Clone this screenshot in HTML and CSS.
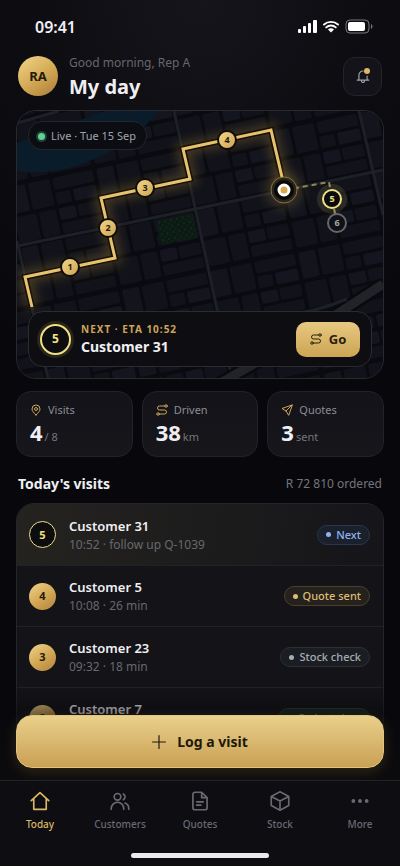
FILE: index.html
```
<!DOCTYPE html>
<html lang="en">
<head>
    <meta charset="UTF-8">
    <meta name="viewport" content="width=device-width, initial-scale=1.0">
    <title>My day</title>
    <link rel="stylesheet" href="styles.css">
</head>
<body>
    <div class="app">
        <div class="status-bar">
            <span class="time">09:41</span>
            <svg class="status-icons" viewBox="0 0 76 16" aria-hidden="true">
                <g fill="#fff">
                    <rect x="0" y="10" width="3" height="4" rx="1"/>
                    <rect x="5" y="7" width="3" height="7" rx="1"/>
                    <rect x="10" y="4" width="3" height="10" rx="1"/>
                    <rect x="15" y="1" width="4" height="13" rx="1"/>
                    <rect x="50" y="3" width="17" height="9" rx="2"/>
                    <path d="M30 10.500a4 4 0 0 1 6 0L33 13.500z"/>
                </g>
                <path d="M26 5.500a10.500 10.500 0 0 1 14 0M28.200 8.400a7 7 0 0 1 9.600 0" fill="none" stroke="#fff" stroke-width="1.900" stroke-linecap="round"/>
                <rect x="48" y="1" width="23" height="13" rx="4" fill="none" stroke="#77777b"/>
                <path d="M73 5v5c2-1 2-4 0-5z" fill="#77777b"/>
            </svg>
        </div>

        <header class="header">
            <div class="avatar">RA</div>
            <div class="greeting">
                <p>Good morning, Rep A</p>
                <h1>My day</h1>
            </div>
            <button class="bell" type="button" aria-label="Notifications">
                <svg class="icon" viewBox="0 0 24 24"><path d="M2 19h20M5 19V11a7 7 0 0 1 7-7.500M19 19v-7M9.500 20.500c0 3.500 5 3.500 5 0"/></svg>
                <span class="bell-dot"></span>
            </button>
        </header>

        <main class="content">
            <section class="map-card" aria-label="Route map">
                <svg class="map" viewBox="0 0 366 267" preserveAspectRatio="xMidYMid slice">
                    <defs>
                        <pattern id="blocks" width="90" height="62" patternUnits="userSpaceOnUse" patternTransform="translate(8 166) rotate(-12)">
                            <rect width="90" height="62" fill="#0a0b10"/>
                            <g fill="#12131a">
                                <rect x="2" y="2" width="22" height="26" rx="2"/>
                                <rect x="27" y="2" width="17" height="26" rx="2"/>
                                <rect x="47" y="2" width="17" height="12" rx="2" fill="#14151e"/>
                                <rect x="66" y="2" width="22" height="12" rx="2"/>
                                <rect x="47" y="17" width="41" height="11" rx="2"/>
                                <rect x="2" y="33" width="17" height="27" rx="2" fill="#13141c"/>
                                <rect x="22" y="33" width="22" height="27" rx="2"/>
                                <rect x="47" y="33" width="41" height="12" rx="2"/>
                                <rect x="47" y="48" width="15" height="12" rx="2"/>
                                <rect x="65" y="48" width="23" height="12" rx="2" fill="#14151e"/>
                            </g>
                        </pattern>
                        <pattern id="trees" width="6" height="6" patternUnits="userSpaceOnUse">
                            <rect width="6" height="6" fill="#0b1a13"/>
                            <circle cx="2" cy="2" r="1" fill="#142f1e"/>
                            <circle cx="5" cy="5" r="1" fill="#10261a"/>
                        </pattern>
                        <linearGradient id="gold" x1="0" y1="0" x2="1" y2="1">
                            <stop offset="0" stop-color="#f3d88c"/>
                            <stop offset="1" stop-color="#cda252"/>
                        </linearGradient>
                        <filter id="glow" x="-20%" y="-20%" width="140%" height="140%">
                            <feGaussianBlur stdDeviation="6"/>
                        </filter>
                    </defs>
                    <rect width="366" height="267" fill="url(#blocks)"/>
                    <path d="M0 60C40 68 105 46 142 0H88L0 32z" fill="#0a1c29"/>
                    <rect x="-19" y="-12" width="38" height="24" rx="3" transform="translate(160 118) rotate(-12)" fill="url(#trees)"/>
                    <g class="roads">
                        <path d="M0 12L42 0M0 135L366 59M157 0L215 267M342 0L366 104M0 130L31 267"/>
                        <path class="road-dark" d="M200 274L270 234Q310 210 366 173"/>
                        <path class="road-wide" d="M200 274L270 234Q310 210 366 173"/>
                        <path d="M260 206Q300 201 330 188"/>
                    </g>

                    <path class="route-glow" d="M15 196L8 166L98 147L84 87L173 68L166 38L254 19L268 79" filter="url(#glow)"/>
                    <path class="route-edge" d="M15 196L8 166L98 147L84 87L173 68L166 38L254 19L268 79"/>
                    <path class="route" d="M15 196L8 166L98 147L84 87L173 68L166 38L254 19L268 79"/>
                    <path class="route-ahead" d="M268 79L312 71L315 88L320 112"/>

                    <g class="stops">
                        <circle cx="53" cy="156" r="9"/><text x="53" y="159">1</text>
                        <circle cx="91" cy="117" r="9"/><text x="91" y="120">2</text>
                        <circle cx="128" cy="77" r="9"/><text x="128" y="80">3</text>
                        <circle cx="210" cy="29" r="9"/><text x="210" y="32">4</text>
                    </g>

                    <circle cx="267" cy="79" r="18" fill="#dfb65f" opacity=".2" filter="url(#glow)"/>
                    <circle cx="267" cy="79" r="13" fill="#2a2519" stroke="#857444"/>
                    <circle cx="267" cy="79" r="10" fill="#08080b"/>
                    <circle cx="267" cy="79" r="5" fill="#d8a850" stroke="#fff" stroke-width="3"/>

                    <circle cx="320" cy="112" r="9" fill="#101116" stroke="#65676d" stroke-width="2"/>
                    <text class="stop-later" x="320" y="115">6</text>
                    <circle cx="315" cy="88" r="15" fill="#eadb7a" opacity=".12"/>
                    <circle cx="315" cy="88" r="9" fill="#0c0c0f" stroke="#f1e184" stroke-width="2"/>
                    <text class="stop-next" x="315" y="91">5</text>
                </svg>

                <div class="live"><span class="live-dot"></span>Live · Tue 15 Sep</div>

                <div class="next-card">
                    <span class="next-number">5</span>
                    <div class="next-info">
                        <p>NEXT · ETA 10:52</p>
                        <h2>Customer 31</h2>
                    </div>
                    <button class="go" type="button">
                        <svg class="icon" viewBox="0 0 24 24"><circle cx="20" cy="4" r="2.500"/><circle cx="4" cy="20" r="2.500"/><path d="M17.500 4H7a4 4 0 0 0 0 8h10a4 4 0 0 1 0 8H6.500"/></svg>
                        Go
                    </button>
                </div>
            </section>

            <section class="stats">
                <div class="stat">
                    <p><svg class="icon" viewBox="0 0 24 24"><path d="M12 22C7 17 4 13.500 4 10a8 8 0 0 1 16 0c0 3.500-3 7-8 12z"/><circle cx="12" cy="10" r="3"/></svg>Visits</p>
                    <div class="value"><strong>4</strong><span>/ 8</span></div>
                </div>
                <div class="stat">
                    <p><svg class="icon" viewBox="0 0 24 24"><circle cx="20" cy="4" r="2.500"/><circle cx="4" cy="20" r="2.500"/><path d="M17.500 4H7a4 4 0 0 0 0 8h10a4 4 0 0 1 0 8H6.500"/></svg>Driven</p>
                    <div class="value"><strong>38</strong><span>km</span></div>
                </div>
                <div class="stat">
                    <p><svg class="icon" viewBox="0 0 24 24"><path d="M22 2L2 9l8 5 5 8zM22 2L10 14"/></svg>Quotes</p>
                    <div class="value"><strong>3</strong><span>sent</span></div>
                </div>
            </section>

            <div class="section-head">
                <h2>Today's visits</h2>
                <span>R 72 810 ordered</span>
            </div>

            <ul class="visits">
                <li class="visit current">
                    <span class="number">5</span>
                    <div class="visit-info">
                        <h3>Customer 31</h3>
                        <p>10:52 · follow up Q-1039</p>
                    </div>
                    <span class="tag blue">Next</span>
                </li>
                <li class="visit">
                    <span class="number">4</span>
                    <div class="visit-info">
                        <h3>Customer 5</h3>
                        <p>10:08 · 26 min</p>
                    </div>
                    <span class="tag amber">Quote sent</span>
                </li>
                <li class="visit">
                    <span class="number">3</span>
                    <div class="visit-info">
                        <h3>Customer 23</h3>
                        <p>09:32 · 18 min</p>
                    </div>
                    <span class="tag grey">Stock check</span>
                </li>
                <li class="visit">
                    <span class="number">2</span>
                    <div class="visit-info">
                        <h3>Customer 7</h3>
                        <p>08:55 · 22 min</p>
                    </div>
                    <span class="tag green">Order taken</span>
                </li>
            </ul>
        </main>

        <div class="bottom">
            <div class="cta">
                <button class="log" type="button">
                    <svg class="icon" viewBox="0 0 24 24"><path d="M12 1v22M1 12h22"/></svg>
                    Log a visit
                </button>
            </div>
            <nav class="tabs">
                <a class="active" href="#today">
                    <svg class="icon" viewBox="0 0 24 24"><path d="M1.500 11.500L12 2l10.500 9.500M4.500 9v13h15V9"/></svg>
                    Today
                </a>
                <a href="#customers">
                    <svg class="icon" viewBox="0 0 24 24"><circle cx="9" cy="7" r="4"/><path d="M1.500 22v-1a7.500 7.500 0 0 1 15 0v1M16 3.500a4 4 0 0 1 0 7M18 14.500a7 7 0 0 1 4.500 6.500v1"/></svg>
                    Customers
                </a>
                <a href="#quotes">
                    <svg class="icon" viewBox="0 0 24 24"><path d="M14 1.500H6A2.500 2.500 0 0 0 3.500 4v16A2.500 2.500 0 0 0 6 22.500h12a2.500 2.500 0 0 0 2.500-2.500V8zM14 1.500V8h6.500M8 13h8M8 17h5"/></svg>
                    Quotes
                </a>
                <a href="#stock">
                    <svg class="icon" viewBox="0 0 24 24"><path d="M12 1l10.500 5.500v11L12 23 1.500 17.500v-11zM1.500 6.500L12 12l10.500-5.500M12 12v11"/></svg>
                    Stock
                </a>
                <a href="#more">
                    <svg class="icon dots" viewBox="0 0 24 24"><circle cx="4" cy="12" r="2.300"/><circle cx="12" cy="12" r="2.300"/><circle cx="20" cy="12" r="2.300"/></svg>
                    More
                </a>
            </nav>
            <div class="home-bar"></div>
        </div>
    </div>
</body>
</html>
```
FILE: styles.css
```
* {
    box-sizing: border-box;
}
body {
    margin: 0;
    background: #08080c;
    color: #efeff3;
    font-family: "Segoe UI", "Noto Sans", sans-serif;
    font-size: 12px;
    line-height: 16px;
}
h1, h2, h3, p, ul {
    margin: 0;
    padding: 0;
}
button {
    font-family: inherit;
    cursor: pointer;
}
.icon {
    width: 14px;
    height: 14px;
    fill: none;
    stroke: currentColor;
    stroke-width: 2;
    stroke-linecap: round;
    stroke-linejoin: round;
}
.app {
    display: flex;
    flex-direction: column;
    height: 100vh;
    position: relative;
    overflow: hidden;
    background: radial-gradient(circle at 50% 0, #15151b, #0c0c11 180px, #08080c 400px);
}

/* status bar and header */
.status-bar {
    display: flex;
    justify-content: space-between;
    align-items: center;
    padding: 16px 26px 0 35px;
    height: 38px;
}
.time {
    font-size: 16px;
    font-weight: 600;
}
.status-icons {
    width: 76px;
    height: 16px;
}
.header {
    display: flex;
    align-items: center;
    gap: 11px;
    padding: 15px 18px 11px;
}
.avatar {
    display: grid;
    place-items: center;
    width: 40px;
    height: 40px;
    border-radius: 50%;
    background: linear-gradient(145deg, #f0d68a, #d6ac57 50%, #a87c38);
    color: #211a0b;
    font-size: 13px;
    font-weight: 700;
}
.greeting {
    flex: 1;
    padding-top: 2px;
}
.greeting p {
    color: #66676e;
}
.greeting h1 {
    font-size: 20px;
    line-height: 24px;
    margin-top: 4px;
}
.bell {
    position: relative;
    display: grid;
    place-items: center;
    width: 39px;
    height: 39px;
    padding: 0;
    border: 1px solid #24252b;
    border-radius: 12px;
    background: #131319;
    color: #a3a4ab;
}
.bell-dot {
    position: absolute;
    top: 10px;
    right: 11px;
    width: 6px;
    height: 6px;
    border-radius: 50%;
    background: #dfb862;
}
.content {
    flex: 1;
    min-height: 0;
    overflow-y: auto;
    scrollbar-width: none;
    padding: 0 16px;
}

/* map */
.map-card {
    position: relative;
    display: flex;
    flex-direction: column;
    justify-content: space-between;
    align-items: flex-start;
    min-height: 269px;
    padding: 10px 11px 11px;
    border: 1px solid #292a2f;
    border-radius: 20px;
    overflow: hidden;
    background: #0a0b10;
}
.map {
    position: absolute;
    inset: 0;
    width: 100%;
    height: 100%;
}
.roads path {
    fill: none;
    stroke: #1e2027;
    stroke-width: 3;
}
.roads .road-dark {
    stroke: #090a0e;
    stroke-width: 14;
}
.roads .road-wide {
    stroke: #212329;
    stroke-width: 9;
}
.route-glow, .route-edge, .route, .route-ahead {
    fill: none;
}
.route-glow {
    stroke: #d6a53c;
    stroke-width: 12;
    opacity: .28;
}
.route-edge {
    stroke: #171005;
    stroke-width: 6;
}
.route {
    stroke: #e6c16f;
    stroke-width: 3;
}
.route-ahead {
    stroke: #8e8755;
    stroke-width: 2;
    stroke-dasharray: 5 4;
}
.map text {
    font-size: 9px;
    font-weight: 700;
    text-anchor: middle;
    fill: #241b0a;
}
.stops circle {
    fill: url(#gold);
    stroke: #100d08;
    stroke-width: 2;
}
.map .stop-next {
    fill: #f1e184;
}
.map .stop-later {
    fill: #a4a5aa;
}
.live {
    position: relative;
    display: flex;
    align-items: center;
    gap: 6px;
    padding: 6px 10px 5px 9px;
    border: 1px solid #25262b;
    border-radius: 14px;
    background: #0c0d12;
    color: #a3a4ab;
    font-size: 11px;
}
.live-dot {
    width: 7px;
    height: 7px;
    border-radius: 50%;
    background: #63cf98;
    box-shadow: 0 0 0 2px #1e4033;
}
.next-card {
    position: relative;
    display: flex;
    align-items: center;
    gap: 10px;
    width: 100%;
    padding: 9px 11px;
    border: 1px solid #2b2c31;
    border-radius: 15px;
    background: #0e0e12;
}
.next-number {
    display: grid;
    place-items: center;
    width: 31px;
    height: 31px;
    border: 2px solid #efdf85;
    border-radius: 50%;
    box-shadow: 0 0 0 3px #28251b;
    background: #0d0d10;
    color: #f1e184;
    font-weight: 700;
}
.next-info {
    flex: 1;
}
.next-info p {
    color: #cda45a;
    font-size: 10px;
    font-weight: 700;
    letter-spacing: 1px;
}
.next-info h2 {
    font-size: 14px;
    line-height: 20px;
}
.go {
    display: flex;
    align-items: center;
    justify-content: center;
    gap: 7px;
    width: 64px;
    height: 35px;
    padding: 0;
    border: 0;
    border-radius: 10px;
    background: linear-gradient(#e6c980, #cda454);
    color: #2a200d;
    font-size: 13px;
    font-weight: 700;
}
.go .icon {
    width: 12px;
    height: 12px;
}

/* stats */
.stats {
    display: grid;
    grid-template-columns: repeat(3, 1fr);
    gap: 9px;
    margin-top: 12px;
}
.stat {
    padding: 10px 13px;
    border: 1px solid #222329;
    border-radius: 15px;
    background: linear-gradient(#131319, #16161b);
}
.stat p {
    display: flex;
    align-items: center;
    gap: 6px;
    color: #8c8d94;
    font-size: 11px;
}
.stat .icon {
    width: 12px;
    height: 12px;
    color: #cda65a;
}
.value {
    display: flex;
    align-items: baseline;
    gap: 2px;
}
.value strong {
    font-size: 22px;
    line-height: 28px;
}
.value span {
    color: #74757c;
    font-size: 11px;
}

/* visits list */
.section-head {
    display: flex;
    align-items: center;
    justify-content: space-between;
    padding: 17px 2px 9px;
}
.section-head h2 {
    font-size: 14px;
    line-height: 20px;
}
.section-head span {
    color: #74757c;
}
.visits {
    list-style: none;
    border: 1px solid #24252a;
    border-radius: 18px;
    background: #131318;
    overflow: hidden;
}
.visit {
    display: flex;
    align-items: center;
    gap: 13px;
    height: 61px;
    padding: 0 13px 0 12px;
}
.visit + .visit {
    border-top: 1px solid #212227;
}
.current {
    background: linear-gradient(100deg, #25231f, #1b1b1c 60%, #15151a);
}
.number {
    display: grid;
    place-items: center;
    width: 27px;
    height: 27px;
    border-radius: 50%;
    background: linear-gradient(145deg, #efd48a, #d1a552 55%, #b18440);
    color: #241b0b;
    font-size: 11px;
    font-weight: 700;
}
.current .number {
    border: 1px solid #eee08a;
    background: #0d0d10;
    color: #f1e184;
}
.visit-info {
    flex: 1;
}
.visit h3 {
    font-size: 13px;
    font-weight: 600;
    line-height: 20px;
}
.visit p {
    color: #67686f;
    line-height: 18px;
}
.tag {
    display: flex;
    align-items: center;
    gap: 5px;
    padding: 0 8px;
    border: 1px solid currentColor;
    border-radius: 11px;
    font-size: 11px;
    font-weight: 500;
    line-height: 18px;
}
.tag::before {
    content: "";
    width: 5px;
    height: 5px;
    border-radius: 50%;
    background: currentColor;
}
.blue {
    color: #8fb2ee;
    background: #1a202c;
    border-color: #29364b;
}
.amber {
    color: #dfbd76;
    background: #25211c;
    border-color: #4a3f2a;
}
.grey {
    color: #a8abb1;
    background: #1a1e23;
    border-color: #2a3036;
}
.green {
    color: #63bf86;
    background: #17261f;
    border-color: #234334;
}

/* bottom bar lies over the scrolling list */
.bottom {
    position: absolute;
    right: 0;
    bottom: 0;
    left: 0;
}
.cta {
    padding: 30px 16px 12px;
    background: linear-gradient(transparent, #08080c88 30px, #0b0b0e 70px);
}
.log {
    display: flex;
    align-items: center;
    justify-content: center;
    gap: 11px;
    width: 100%;
    height: 53px;
    border: 1px solid #e2c47c;
    border-radius: 16px;
    background: linear-gradient(#ead08a, #c9a055);
    box-shadow: 0 4px 14px #c9963430;
    color: #20190b;
    font-size: 14px;
    font-weight: 700;
}
.tabs {
    display: grid;
    grid-template-columns: repeat(5, 1fr);
    padding: 10px 0 21px;
    border-top: 1px solid #222327;
    background: #0d0d12;
}
.tabs a {
    display: flex;
    flex-direction: column;
    align-items: center;
    gap: 5px;
    color: #696a71;
    font-size: 10px;
    font-weight: 500;
    text-decoration: none;
}
.tabs .active {
    color: #dcb867;
}
.tabs .icon {
    width: 20px;
    height: 20px;
}
.tabs .dots {
    fill: currentColor;
    stroke: none;
}
.home-bar {
    padding-bottom: 8px;
    background: #0d0d12;
}
.home-bar::before {
    content: "";
    display: block;
    width: 138px;
    height: 5px;
    margin: 0 auto;
    border-radius: 3px;
    background: #e9e9ee;
}
```
